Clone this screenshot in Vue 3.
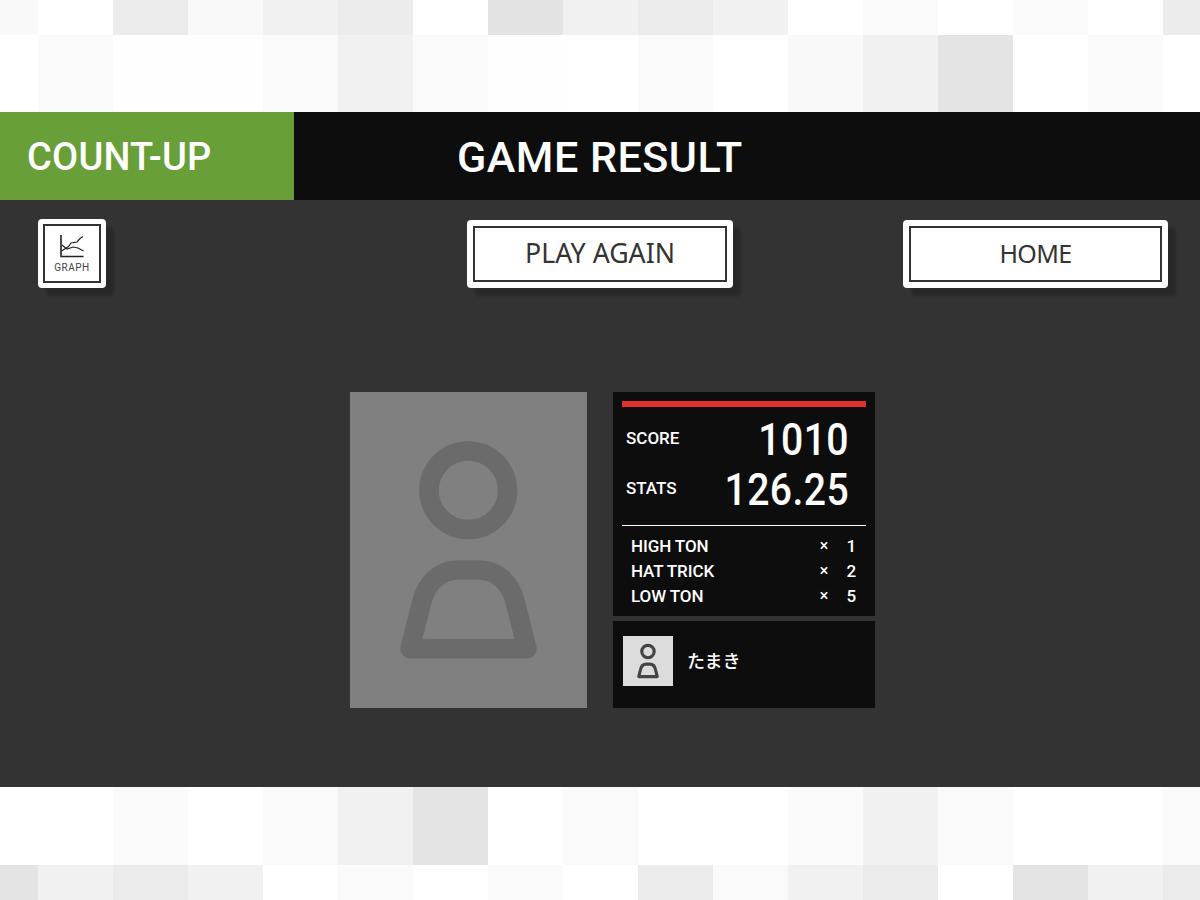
<script setup>
const topRows = [
  ['f9f9f9', 'ffffff', 'ebebeb', 'f9f9f9', 'f1f1f1', 'ececec', 'ffffff', 'e3e3e3', 'f1f1f1', 'ebebeb', 'f1f1f1', 'ffffff', 'fafafa', 'ffffff', 'fafafa', 'ffffff', 'ebebeb'],
  ['ffffff', 'fafafa', 'fefefe', 'fefefe', 'fafafa', 'f1f1f1', 'fafafa', 'fefefe', 'ffffff', 'fafafa', 'ffffff', 'f9f9f9', 'f1f1f1', 'e4e4e4', 'ffffff', 'fafafa', 'ffffff']
]
const bottomRows = [
  ['ffffff', 'ffffff', 'fafafa', 'ffffff', 'fafafa', 'f1f1f1', 'e4e4e4', 'ffffff', 'fafafa', 'ffffff', 'ffffff', 'fafafa', 'f1f1f1', 'fafafa', 'ffffff', 'ffffff', 'fafafa'],
  ['e4e4e4', 'f1f1f1', 'ebebeb', 'f1f1f1', 'ffffff', 'fafafa', 'ffffff', 'fafafa', 'ffffff', 'ebebeb', 'fafafa', 'f1f1f1', 'ebebeb', 'ffffff', 'e4e4e4', 'f1f1f1', 'ebebeb']
]
const bodyPath = 'M60 256.7 L71.5 211 C76 191 90 178 108 178 H129 C147 178 161 191 165.5 211 L177 256.7 Z'
const awards = [
  { name: 'HIGH TON', count: 1 },
  { name: 'HAT TRICK', count: 2 },
  { name: 'LOW TON', count: 5 }
]
</script>

<template>
  <div class="screen">
    <div class="band band-top">
      <div v-for="(row, r) in topRows" :key="r" class="tiles">
        <span v-for="(c, i) in row" :key="i" :style="{ background: '#' + c }"></span>
      </div>
    </div>

    <div class="header">
      <div class="mode">COUNT-UP</div>
      <div class="title">GAME RESULT</div>
    </div>

    <div class="body">
      <div class="actions">
        <button class="btn graph">
          <span class="btn-inner graph-inner">
            <svg width="24" height="24" viewBox="0 0 24 24" fill="none" stroke="#222" stroke-width="1.2">
              <path d="M1 1 V22.5 H23.5" stroke-width="1.6" />
              <path d="M1.5 17 L8.5 12.5 L11 9 L17 8 L20 4.5 L23 2.5" />
              <path d="M2 11 L7 15 L13 13 L18 14 L23.5 17" />
            </svg>
            <span class="graph-label">GRAPH</span>
          </span>
        </button>
        <button class="btn wide"><span class="btn-inner">PLAY AGAIN</span></button>
        <button class="btn wide home"><span class="btn-inner">HOME</span></button>
      </div>

      <div class="result">
        <div class="portrait">
          <svg width="237" height="316" viewBox="0 0 237 316" fill="none" stroke="#6b6b6b" stroke-width="19.5" stroke-linejoin="round">
            <circle cx="118.3" cy="98.3" r="39.3" />
            <path :d="bodyPath" />
          </svg>
        </div>

        <div class="side">
          <div class="score-panel">
            <div class="red-bar"></div>
            <div class="stat">
              <span class="stat-label">SCORE</span>
              <span class="stat-value">1010</span>
            </div>
            <div class="stat">
              <span class="stat-label">STATS</span>
              <span class="stat-value">126.25</span>
            </div>
            <div class="divider"></div>
            <div v-for="a in awards" :key="a.name" class="award">
              <span class="award-name">{{ a.name }}</span>
              <span class="award-x">×</span>
              <span class="award-count">{{ a.count }}</span>
            </div>
          </div>

          <div class="player-panel">
            <div class="avatar">
              <svg width="38" height="50" viewBox="0 0 237 316" fill="none" stroke="#444" stroke-width="19.5" stroke-linejoin="round">
                <circle cx="118.3" cy="98.3" r="39.3" />
                <path :d="bodyPath" />
              </svg>
            </div>
            <span class="player-name">たまき</span>
          </div>
        </div>
      </div>
    </div>

    <div class="band band-bottom">
      <div v-for="(row, r) in bottomRows" :key="r" class="tiles">
        <span v-for="(c, i) in row" :key="i" :style="{ background: '#' + c }"></span>
      </div>
    </div>
  </div>
</template>

<style>
html, body {
  background: #fff;
}
</style>

<style scoped>
.screen {
  width: 1200px;
  height: 900px;
  overflow: hidden;
  display: flex;
  flex-direction: column;
  font-family: Roboto, "Liberation Sans", sans-serif;
}

.band {
  display: grid;
}
.band-top {
  height: 112px;
  grid-template-rows: 35px 77px;
}
.band-bottom {
  height: 113px;
  grid-template-rows: 78px 35px;
}
.tiles {
  display: grid;
  grid-template-columns: 38px repeat(15, 75px) 37px;
}

.header {
  height: 88px;
  display: flex;
  background: #0d0d0d;
  color: #fff;
}
.mode {
  width: 294px;
  box-sizing: border-box;
  padding: 1px 0 0 27px;
  background: #689f38;
  font-size: 38px;
  font-weight: 500;
  line-height: 88px;
  letter-spacing: 0.2px;
}
.title {
  padding: 1px 0 0 163px;
  font-size: 43px;
  font-weight: 500;
  line-height: 88px;
  letter-spacing: 0.5px;
}

.body {
  height: 587px;
  background: #333;
}

.actions {
  display: grid;
  grid-template-columns: 429px 266px 170px 265px;
  align-items: start;
  padding: 19px 0 0 38px;
}
.btn {
  display: block;
  box-sizing: border-box;
  padding: 5px;
  border: 0;
  border-radius: 4px;
  background: #fff;
  box-shadow: 8px 8px 3px rgba(0, 0, 0, 0.2);
  font-family: "Noto Sans", sans-serif;
  color: #333;
}
.btn-inner {
  display: flex;
  align-items: center;
  justify-content: center;
  height: 100%;
  box-sizing: border-box;
  border: 2px solid #333;
}
.wide {
  height: 68px;
  margin-top: 1px;
  width: 100%;
  padding: 6px;
  font-size: 26.7px;
}
.wide .btn-inner {
  padding-bottom: 3px;
}
.home {
  grid-column: 4;
  font-size: 25px;
  letter-spacing: -0.6px;
}
.graph {
  width: 68px;
  height: 69px;
}
.graph-inner {
  flex-direction: column;
}
.graph-label {
  margin-top: 4px;
  font-family: Roboto, sans-serif;
  font-size: 10px;
  line-height: 12px;
  letter-spacing: 0.5px;
  color: #444;
}

.result {
  display: flex;
  gap: 26px;
  margin-top: 104px;
  padding-left: 350px;
}
.portrait {
  width: 237px;
  height: 316px;
  background: #808080;
}
.portrait svg {
  display: block;
}

.side {
  width: 262px;
  display: flex;
  flex-direction: column;
  gap: 5px;
  color: #fff;
}
.score-panel {
  height: 224px;
  box-sizing: border-box;
  padding: 9px 9px 0;
  background: #0d0d0d;
}
.red-bar {
  height: 6px;
  margin-bottom: 6px;
  background: #e03131;
}
.stat {
  height: 50px;
  display: flex;
  align-items: center;
  justify-content: space-between;
  padding: 0 17px 0 4px;
}
.stat-label {
  font-size: 17px;
  font-weight: 500;
}
.stat-value {
  margin-top: 3px;
  font-size: 44px;
  font-weight: 500;
  letter-spacing: 0.5px;
  transform: scaleX(0.89);
  transform-origin: right center;
}
.divider {
  height: 1px;
  margin: 12px 0 7px;
  background: #fff;
}
.award {
  height: 25px;
  display: flex;
  align-items: center;
  padding: 0 10px 0 9px;
  font-size: 17px;
  font-weight: 500;
  letter-spacing: -0.1px;
}
.award-name {
  flex: 1;
}
.award-x {
  width: 10px;
  font-size: 16px;
  text-align: center;
}
.award-count {
  width: 27px;
  text-align: right;
}

.player-panel {
  height: 87px;
  display: flex;
  align-items: center;
  gap: 14px;
  padding: 0 0 8px 10px;
  box-sizing: border-box;
  background: #0d0d0d;
}
.avatar {
  width: 50px;
  height: 50px;
  display: flex;
  justify-content: center;
  background: #dcdcdc;
}
.player-name {
  margin-bottom: 2px;
  font-family: "Noto Sans CJK JP", sans-serif;
  font-size: 18px;
  font-weight: 500;
}
</style>
